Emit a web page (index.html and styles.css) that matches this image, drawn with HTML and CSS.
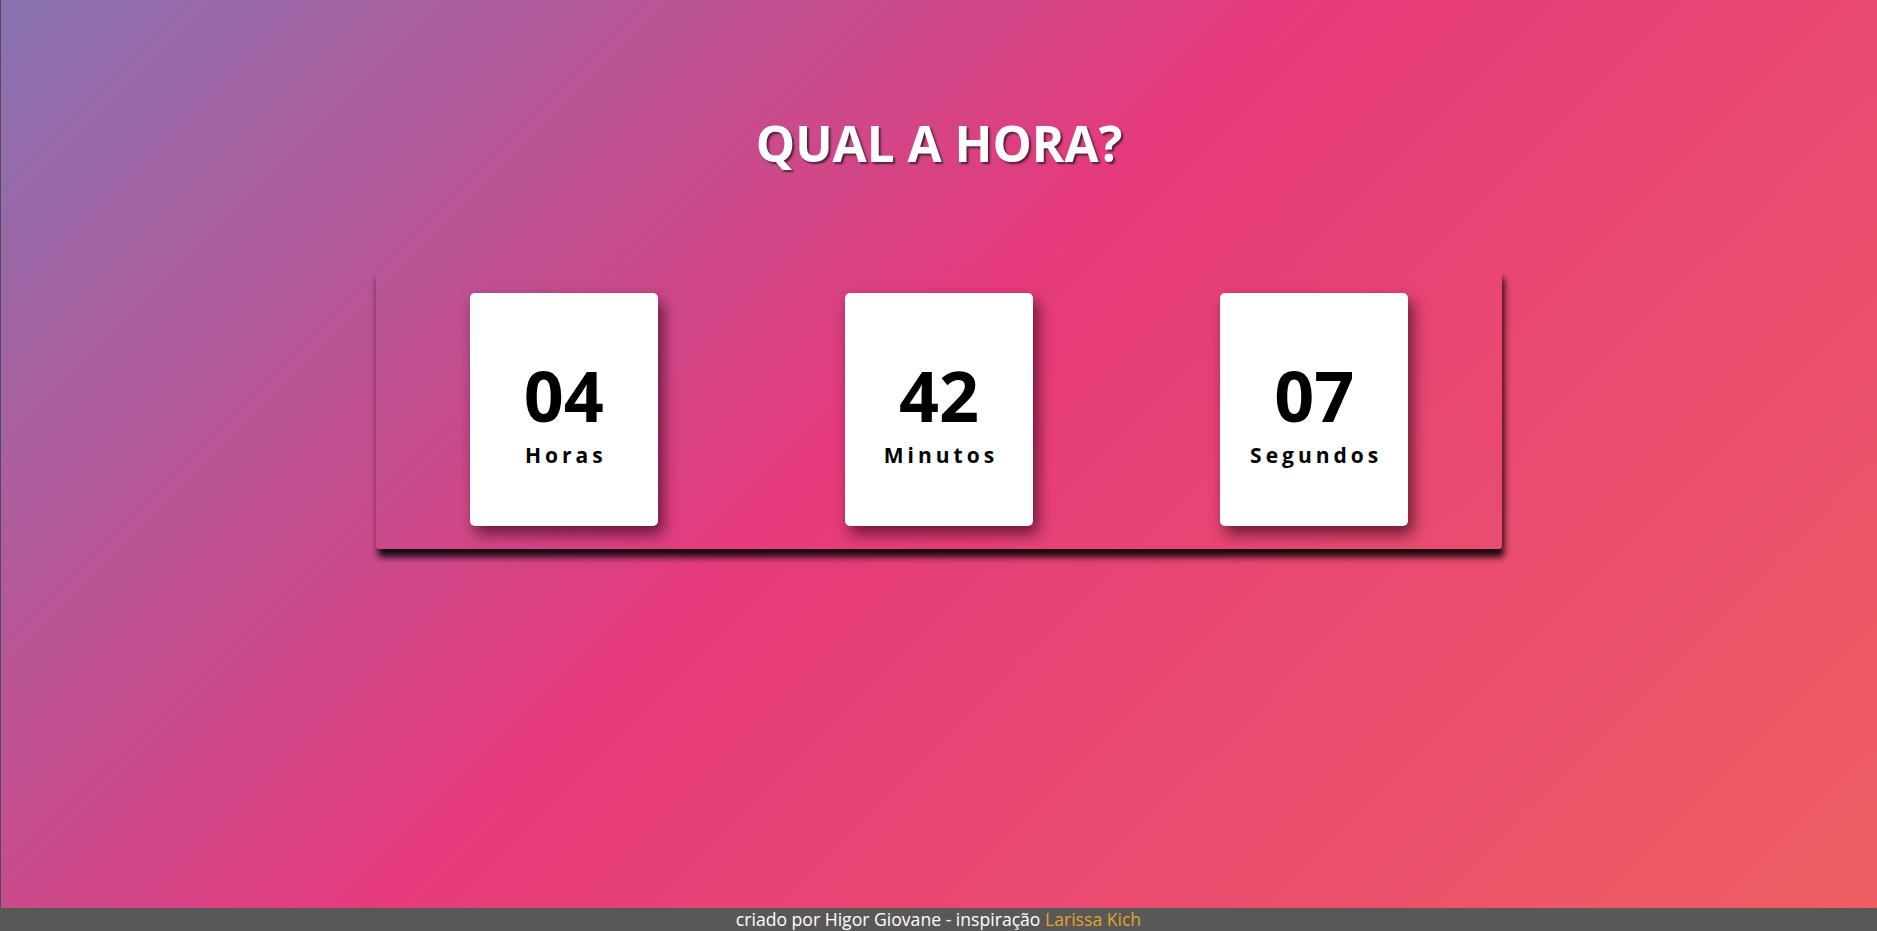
FILE: index.html
```
<!DOCTYPE html>
<html lang="pt-BR">
<head>
<meta charset="utf-8">
<title>Qual a hora?</title>
<link rel="stylesheet" href="styles.css">
</head>
<body>
<main class="page">
  <h1 class="title">QUAL A HORA?</h1>
  <section class="clock">
    <div class="card">
      <span class="num">04</span>
      <span class="label">Horas</span>
    </div>
    <div class="card">
      <span class="num">42</span>
      <span class="label">Minutos</span>
    </div>
    <div class="card">
      <span class="num">07</span>
      <span class="label">Segundos</span>
    </div>
  </section>
</main>
<footer class="footer">criado por Higor Giovane - inspiração <span class="link">Larissa Kich</span></footer>
</body>
</html>
```
FILE: styles.css
```
html, body {
  margin: 0;
  padding: 0;
  height: 100%;
}
body {
  display: flex;
  flex-direction: column;
  height: 100vh;
  font-family: "Open Sans", "Noto Sans", sans-serif;
  background: linear-gradient(135deg, #8873b1 0%, #e63a7c 46%, #ee5f61 100%);
  overflow: hidden;
}
.page {
  flex: 1;
  display: flex;
  flex-direction: column;
  align-items: center;
  border-left: 1px solid #4d4d55;
}
.title {
  margin: 109px 0 0;
  font-size: 49.5px;
  font-weight: 700;
  line-height: normal;
  color: #fff;
  text-shadow: 2px 2px 2px rgba(40, 20, 30, 0.75);
}
.clock {
  margin-top: 93px;
  width: 60%;
  height: 30vh;
  display: flex;
  justify-content: space-around;
  align-items: center;
  border-radius: 3px;
  box-shadow: 2px 8px 7px rgba(0, 0, 0, 0.9);
}
.card {
  width: 10vw;
  height: 25vh;
  background: #fff;
  border-radius: 5px;
  display: flex;
  flex-direction: column;
  justify-content: center;
  align-items: center;
  box-shadow: 5px 8px 15px rgba(40, 0, 20, 0.65);
  color: #000;
}
.num {
  font-size: 70px;
  font-weight: 700;
  line-height: 1.3;
}
.label {
  font-size: 21px;
  font-weight: 700;
  letter-spacing: 4px;
  line-height: normal;
  margin-right: -4px;
}
.footer {
  height: 23px;
  line-height: 23px;
  background: #5a5857;
  color: #fff;
  text-align: center;
  font-size: 17.6px;
}
.link {
  color: #e0a42e;
}
```
